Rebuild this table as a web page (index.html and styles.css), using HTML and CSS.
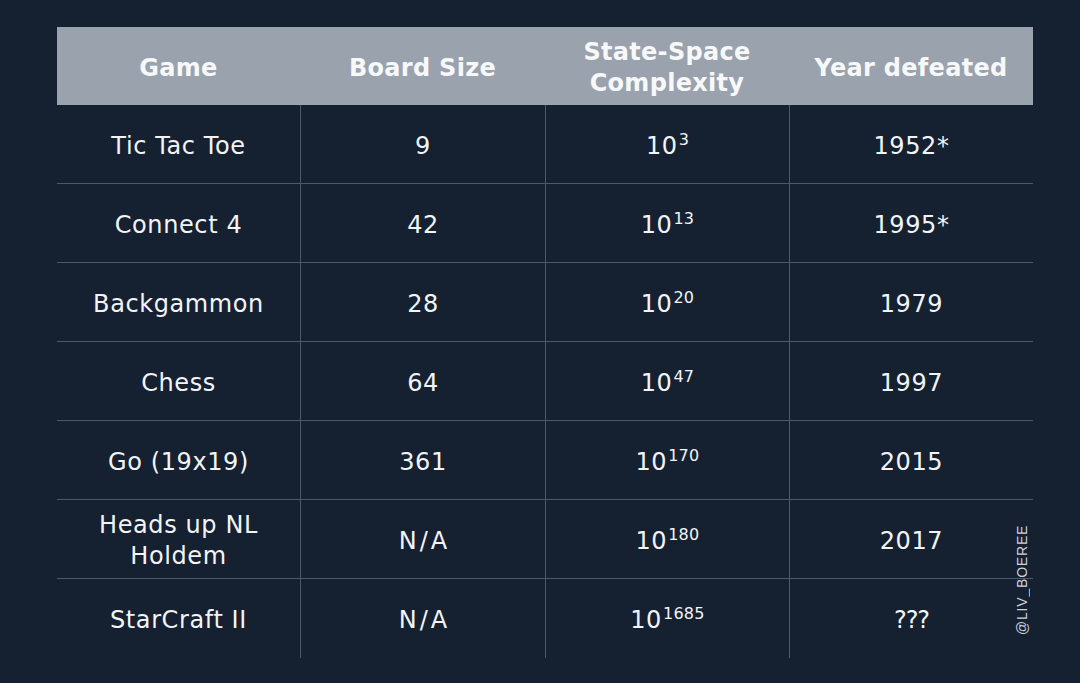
FILE: index.html
```html
<!DOCTYPE html>
<html>
<head>
<meta charset="utf-8">
<link rel="stylesheet" href="styles.css">
</head>
<body>
<div class="page">
  <div class="table">
    <div class="head">
      <div class="hc">Game</div>
      <div class="hc">Board Size</div>
      <div class="hc">State-Space<br>Complexity</div>
      <div class="hc">Year defeated</div>
    </div>
    <div class="row">
      <div class="c">Tic Tac Toe</div>
      <div class="c">9</div>
      <div class="c">10<sup>3</sup></div>
      <div class="c">1952*</div>
    </div>
    <div class="row">
      <div class="c">Connect 4</div>
      <div class="c">42</div>
      <div class="c">10<sup>13</sup></div>
      <div class="c">1995*</div>
    </div>
    <div class="row">
      <div class="c">Backgammon</div>
      <div class="c">28</div>
      <div class="c">10<sup>20</sup></div>
      <div class="c">1979</div>
    </div>
    <div class="row">
      <div class="c">Chess</div>
      <div class="c">64</div>
      <div class="c">10<sup>47</sup></div>
      <div class="c">1997</div>
    </div>
    <div class="row">
      <div class="c">Go (19x19)</div>
      <div class="c">361</div>
      <div class="c">10<sup>170</sup></div>
      <div class="c">2015</div>
    </div>
    <div class="row">
      <div class="c two">Heads up NL<br>Holdem</div>
      <div class="c na">N/A</div>
      <div class="c">10<sup>180</sup></div>
      <div class="c">2017</div>
    </div>
    <div class="row last">
      <div class="c">StarCraft II</div>
      <div class="c na">N/A</div>
      <div class="c">10<sup>1685</sup></div>
      <div class="c q">???</div>
    </div>
  </div>
  <div class="mark">@LIV_BOEREE</div>
</div>
</body>
</html>
```
FILE: styles.css
```css
html, body {
  margin: 0;
  padding: 0;
  background: #152031;
}
body {
  width: 1080px;
  height: 683px;
  overflow: hidden;
  font-family: "DejaVu Sans", "Noto Sans", sans-serif;
  color: #f2f4f7;
}
.page {
  position: relative;
  padding: 27px 47px 0 57px;
}
.table {
  width: 976px;
}
.head {
  display: grid;
  grid-template-columns: 243px 245px 244px 244px;
  height: 78px;
  background: #9aa2ad;
}
.hc {
  display: flex;
  align-items: center;
  justify-content: center;
  text-align: center;
  font-weight: bold;
  font-size: 24px;
  line-height: 31px;
  color: #f7f8fa;
  letter-spacing: 0.3px;
  padding-top: 4px;
}
.row {
  display: grid;
  grid-template-columns: 243px 245px 244px 244px;
  height: 79px;
  border-bottom: 1px solid #4d5868;
  box-sizing: border-box;
}
.row.last {
  border-bottom: none;
}
.c {
  display: flex;
  align-items: center;
  justify-content: center;
  text-align: center;
  font-size: 24px;
  letter-spacing: 0.6px;
  line-height: 31px;
  border-left: 1px solid #4d5868;
  padding-top: 4px;
}
.c:first-child {
  border-left: none;
}
.c.two {
  padding-top: 3px;
}
.c.na {
  letter-spacing: 3px;
  text-indent: 3px;
}
.c.q {
  letter-spacing: -1px;
}
sup {
  font-size: 16px;
  vertical-align: 0;
  position: relative;
  top: -7px;
  margin-left: 1px;
  letter-spacing: 0.3px;
}
.mark {
  position: absolute;
  left: 1013px;
  top: 524px;
  width: 18px;
  height: 112px;
  writing-mode: vertical-rl;
  transform: rotate(180deg);
  font-family: "Liberation Sans", sans-serif;
  font-size: 14px;
  letter-spacing: 0.8px;
  color: #cdd2da;
  text-align: center;
  line-height: 18px;
}
```
